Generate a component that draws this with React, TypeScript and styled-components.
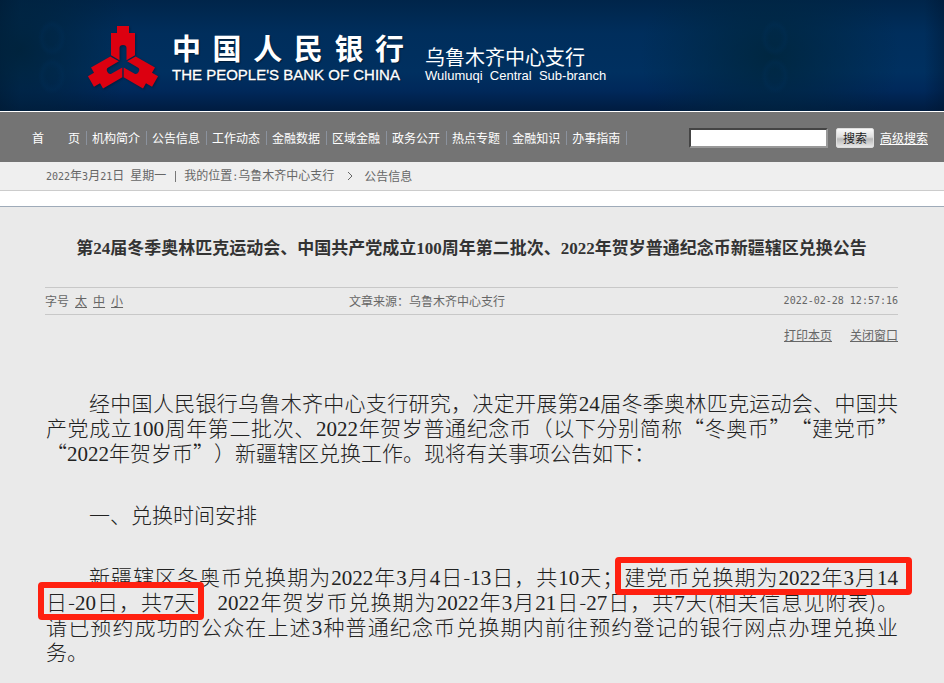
import React from "react";
import styled, { createGlobalStyle } from "styled-components";

const GlobalStyle = createGlobalStyle`
  * { box-sizing: border-box; }
  body {
    margin: 0;
    background: #eaeaea;
    color: #666;
    font-family: "Noto Sans CJK SC", sans-serif;
    font-size: 12px;
    line-height: 16px;
  }
  a { color: inherit; }
`;

const Banner = styled.header`
  display: flex;
  align-items: flex-start;
  height: 112px;
  padding: 25px 16px 0 86px;
  border-bottom: 1px solid #fff;
  color: #fff;
  background:
    radial-gradient(ellipse 14px 18px at 775px 38px, transparent 40%, rgba(0, 48, 92, 0.25) 75%, transparent),
    radial-gradient(ellipse 14px 18px at 775px 76px, transparent 40%, rgba(0, 48, 92, 0.25) 75%, transparent),
    radial-gradient(ellipse 14px 18px at 52px 38px, transparent 40%, rgba(0, 48, 92, 0.25) 75%, transparent),
    radial-gradient(ellipse 14px 18px at 52px 76px, transparent 40%, rgba(0, 48, 92, 0.25) 75%, transparent),
    radial-gradient(ellipse 130px 110px at 770px 56px, rgba(0, 38, 62, 0.9), transparent),
    radial-gradient(ellipse 110px 120px at 20px 50px, rgba(0, 34, 58, 0.9), transparent),
    linear-gradient(to right, rgba(0, 20, 45, 0.5), transparent 20px, transparent calc(100% - 20px), rgba(0, 20, 45, 0.4)),
    linear-gradient(#00254a, #002e5c 30%, #003060 65%, #00285a 82%, #001c40);
`;

const Emblem = styled.svg`
  flex: none;
  width: 74px;
  height: 66px;
  filter: drop-shadow(1px 1px 1px rgba(0, 0, 0, 0.3));
`;

const BankName = styled.div`
  width: 232px;
  margin-left: 12px;
  text-shadow: 1px 1px 1px rgba(0, 0, 0, 0.4);
`;

const BankChinese = styled.div`
  margin-top: 4px;
  font-size: 29px;
  font-weight: 700;
  line-height: 36px;
  text-align-last: justify;
`;

const BankEnglish = styled.div`
  font-family: "Liberation Sans", sans-serif;
  font-size: 15px;
  line-height: 20px;
  white-space: nowrap;
  -webkit-text-stroke: 0.3px #fff;
`;

const Branch = styled.div`
  margin: 20px 0 0 21px;
  white-space: pre;
`;

const BranchChinese = styled.div`
  font-size: 20px;
  line-height: 24px;
`;

const BranchEnglish = styled.div`
  font-family: "Liberation Sans", sans-serif;
  font-size: 13px;
  line-height: 14px;
`;

const NavBar = styled.nav`
  display: flex;
  align-items: center;
  justify-content: space-between;
  height: 50px;
  padding: 2px 16px 0 27px;
  background: #747474;
  color: #fff;
`;

const NavList = styled.ul`
  display: flex;
  margin: 0;
  padding: 0;
  list-style: none;
`;

const NavItem = styled.li`
  padding: 0 6px 0 5px;
  border-right: 1px solid #8b929d;
  line-height: 14px;
  white-space: pre;
  a { text-decoration: none; }
`;

const SearchForm = styled.form`
  display: flex;
  align-items: center;
`;

const SearchInput = styled.input`
  width: 139px;
  height: 20px;
  padding: 0 2px;
  border: 2px solid;
  border-color: #444 #999 #999 #444;
  background: #fff;
`;

const SearchButton = styled.button`
  width: 38px;
  height: 20px;
  margin: 0 6px 0 8px;
  padding: 0;
  border: 1px solid #ddd;
  border-radius: 2px;
  background: linear-gradient(#fafafa, #ddd 45%, #b8b8b8 55%, #e8e8e8);
  color: #222;
  font: inherit;
`;

const Crumbs = styled.div`
  display: flex;
  align-items: center;
  height: 29px;
  padding: 0 46px;
  border-bottom: 1px solid #ccc;
  background: #efefef;
  white-space: pre;
`;

const Divider = styled.span`
  width: 1px;
  height: 11px;
  margin: 0 8px 0 9px;
  background: #777;
`;

const Chevron = styled.svg`
  width: 6px;
  height: 8px;
  margin: 0 11px 0 13px;
`;

const Mono = styled.span`
  font-family: "DejaVu Sans Mono", monospace;
  font-size: 10px;
`;

const Gap = styled.div`
  height: 16px;
  border-bottom: 1px solid #9fabb9;
  background: #fff;
`;

const Article = styled.main`
  padding: 0 46px 20px 45px;
`;

const Title = styled.h1`
  margin: 0;
  padding: 27px 0 26px;
  color: #333;
  font-size: 17px;
  font-weight: 700;
  line-height: 25px;
  text-align: center;
  white-space: nowrap;
`;

const Meta = styled.div`
  display: grid;
  grid-template-columns: 304px 1fr auto;
  align-items: center;
  height: 28px;
  border: solid #c8c8c8;
  border-width: 1px 0;
`;

const Sizes = styled.div`
  display: flex;
  gap: 6px;
`;

const Actions = styled.div`
  display: flex;
  justify-content: flex-end;
  gap: 18px;
  padding: 12px 0 47px;
`;

const Body = styled.div`
  display: grid;
  gap: 37px;
  padding-left: 1px;
  color: #222;
  font-size: 21px;
  font-weight: 300;
  line-height: 25px;
  text-spacing-trim: space-all;
`;

const Paragraph = styled.p`
  margin: 0;
`;

const Line = styled.span<{ $indent?: boolean; $full?: boolean }>`
  display: block;
  height: 25px;
  padding-left: ${(p) => (p.$indent ? 43 : 0)}px;
  text-align-last: ${(p) => (p.$full ? "justify" : "left")};
  white-space: nowrap;
`;

const Numeral = styled.span`
  font-family: "Liberation Serif", serif;
`;

const Marked = styled.span<{ $end?: boolean }>`
  position: relative;
  &::after {
    content: "";
    position: absolute;
    top: -4px;
    bottom: -4px;
    left: -8px;
    right: ${(p) => (p.$end ? -14 : -7)}px;
    border: 6px solid #ff2010;
    border-radius: 4px;
    pointer-events: none;
  }
`;

const numerals = (text: string) =>
  text.split(/([0-9]+)/).map((part, i) => (i % 2 ? <Numeral key={i}>{part}</Numeral> : part));

const navItems = [
  "首　　页", "机构简介", "公告信息", "工作动态", "金融数据",
  "区域金融", "政务公开", "热点专题", "金融知识", "办事指南",
];

export default function App() {
  return (
    <>
      <GlobalStyle />
      <Banner>
        <Emblem viewBox="-37 -38 74 66" role="img" aria-label="中国人民银行">
          {[0, 120, 240].map((angle) => (
            <path
              key={angle}
              transform={`rotate(${angle})`}
              fill="#dc0010"
              d="M-6 -37H6V-30H12V-7.7L3.5 -2.8V-15Q3.5 -18 0 -18Q-3.5 -18 -3.5 -15V-2.8L-12 -7.7V-30H-6Z"
            />
          ))}
        </Emblem>
        <BankName>
          <BankChinese>中国人民银行</BankChinese>
          <BankEnglish>THE PEOPLE'S BANK OF CHINA</BankEnglish>
        </BankName>
        <Branch>
          <BranchChinese>乌鲁木齐中心支行</BranchChinese>
          <BranchEnglish>Wulumuqi  Central  Sub-branch</BranchEnglish>
        </Branch>
      </Banner>
      <NavBar>
        <NavList>
          {navItems.map((label) => (
            <NavItem key={label}><a href="#">{label}</a></NavItem>
          ))}
        </NavList>
        <SearchForm>
          <SearchInput type="text" aria-label="搜索" />
          <SearchButton type="button">搜索</SearchButton>
          <a href="#">高级搜索</a>
        </SearchForm>
      </NavBar>
      <Crumbs>
        <span><Mono>2022</Mono>年<Mono>3</Mono>月<Mono>21</Mono>日<Mono> </Mono>星期一</span>
        <Divider />
        <span>我的位置<Mono>:</Mono>乌鲁木齐中心支行</span>
        <Chevron viewBox="0 0 6 8"><path d="M1 0L5 4L1 8" fill="none" stroke="#666" /></Chevron>
        <span>公告信息</span>
      </Crumbs>
      <Gap />
      <Article>
        <Title>{numerals("第24届冬季奥林匹克运动会、中国共产党成立100周年第二批次、2022年贺岁普通纪念币新疆辖区兑换公告")}</Title>
        <Meta>
          <Sizes><span>字号</span><a href="#">太</a><a href="#">中</a><a href="#">小</a></Sizes>
          <span>文章来源：乌鲁木齐中心支行</span>
          <Mono>2022-02-28 12:57:16</Mono>
        </Meta>
        <Actions><a href="#">打印本页</a><a href="#">关闭窗口</a></Actions>
        <Body>
          <Paragraph>
            <Line $indent $full>{numerals("经中国人民银行乌鲁木齐中心支行研究，决定开展第24届冬季奥林匹克运动会、中国共")}</Line>
            <Line $full>{numerals("产党成立100周年第二批次、2022年贺岁普通纪念币（以下分别简称“冬奥币”“建党币”")}</Line>
            <Line>{numerals("“2022年贺岁币”）新疆辖区兑换工作。现将有关事项公告如下：")}</Line>
          </Paragraph>
          <Paragraph><Line $indent>一、兑换时间安排</Line></Paragraph>
          <Paragraph>
            <Line $indent $full>
              {numerals("新疆辖区冬奥币兑换期为2022年3月4日-13日，共10天；")}
              <Marked $end>{numerals("建党币兑换期为2022年3月14")}</Marked>
            </Line>
            <Line $full>
              <Marked>{numerals("日-20日，共7天")}</Marked>
              {numerals("；2022年贺岁币兑换期为2022年3月21日-27日，共7天(相关信息见附表)。")}
            </Line>
            <Line $full>{numerals("请已预约成功的公众在上述3种普通纪念币兑换期内前往预约登记的银行网点办理兑换业")}</Line>
            <Line>务。</Line>
          </Paragraph>
        </Body>
      </Article>
    </>
  );
}
